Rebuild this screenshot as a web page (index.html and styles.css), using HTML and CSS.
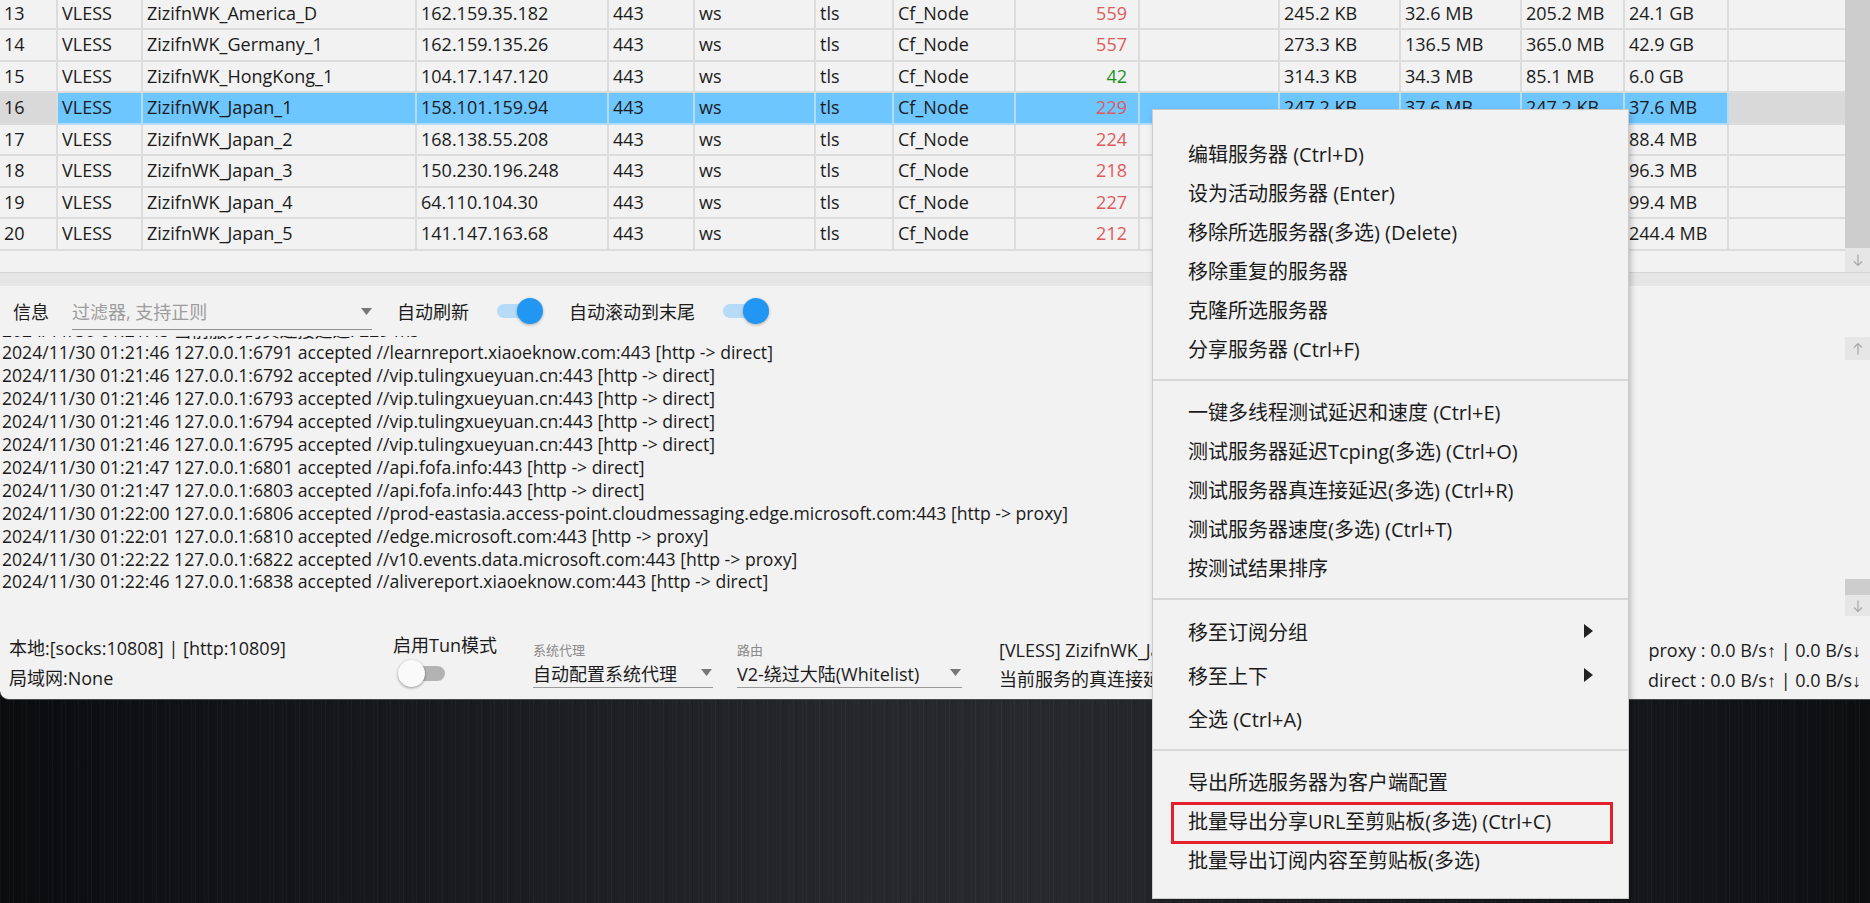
FILE: index.html
```html
<!DOCTYPE html>
<html lang="zh-CN">
<head>
<meta charset="utf-8">
<title>v2rayN</title>
<link rel="stylesheet" href="styles.css">
</head>
<body>
<div class="window">
  <div class="grid-area">
    <div class="grid">
      <div class="rows">
        <div class="row"><div class="cell">13</div><div class="cell">VLESS</div><div class="cell">ZizifnWK_America_D</div><div class="cell">162.159.35.182</div><div class="cell">443</div><div class="cell">ws</div><div class="cell">tls</div><div class="cell">Cf_Node</div><div class="cell num red">559</div><div class="cell"></div><div class="cell">245.2 KB</div><div class="cell">32.6 MB</div><div class="cell">205.2 MB</div><div class="cell">24.1 GB</div><div class="cell fill"></div></div>
        <div class="row"><div class="cell">14</div><div class="cell">VLESS</div><div class="cell">ZizifnWK_Germany_1</div><div class="cell">162.159.135.26</div><div class="cell">443</div><div class="cell">ws</div><div class="cell">tls</div><div class="cell">Cf_Node</div><div class="cell num red">557</div><div class="cell"></div><div class="cell">273.3 KB</div><div class="cell">136.5 MB</div><div class="cell">365.0 MB</div><div class="cell">42.9 GB</div><div class="cell fill"></div></div>
        <div class="row"><div class="cell">15</div><div class="cell">VLESS</div><div class="cell">ZizifnWK_HongKong_1</div><div class="cell">104.17.147.120</div><div class="cell">443</div><div class="cell">ws</div><div class="cell">tls</div><div class="cell">Cf_Node</div><div class="cell num green">42</div><div class="cell"></div><div class="cell">314.3 KB</div><div class="cell">34.3 MB</div><div class="cell">85.1 MB</div><div class="cell">6.0 GB</div><div class="cell fill"></div></div>
        <div class="row sel"><div class="cell">16</div><div class="cell s">VLESS</div><div class="cell s">ZizifnWK_Japan_1</div><div class="cell s">158.101.159.94</div><div class="cell s">443</div><div class="cell s">ws</div><div class="cell s">tls</div><div class="cell s">Cf_Node</div><div class="cell s num red">229</div><div class="cell s"></div><div class="cell s">247.2 KB</div><div class="cell s">37.6 MB</div><div class="cell s">247.2 KB</div><div class="cell s">37.6 MB</div><div class="cell fill"></div></div>
        <div class="row"><div class="cell">17</div><div class="cell">VLESS</div><div class="cell">ZizifnWK_Japan_2</div><div class="cell">168.138.55.208</div><div class="cell">443</div><div class="cell">ws</div><div class="cell">tls</div><div class="cell">Cf_Node</div><div class="cell num red">224</div><div class="cell"></div><div class="cell">198.5 KB</div><div class="cell">41.2 MB</div><div class="cell">2.1 MB</div><div class="cell">88.4 MB</div><div class="cell fill"></div></div>
        <div class="row"><div class="cell">18</div><div class="cell">VLESS</div><div class="cell">ZizifnWK_Japan_3</div><div class="cell">150.230.196.248</div><div class="cell">443</div><div class="cell">ws</div><div class="cell">tls</div><div class="cell">Cf_Node</div><div class="cell num red">218</div><div class="cell"></div><div class="cell">201.7 KB</div><div class="cell">39.9 MB</div><div class="cell">2.4 MB</div><div class="cell">96.3 MB</div><div class="cell fill"></div></div>
        <div class="row"><div class="cell">19</div><div class="cell">VLESS</div><div class="cell">ZizifnWK_Japan_4</div><div class="cell">64.110.104.30</div><div class="cell">443</div><div class="cell">ws</div><div class="cell">tls</div><div class="cell">Cf_Node</div><div class="cell num red">227</div><div class="cell"></div><div class="cell">188.0 KB</div><div class="cell">35.8 MB</div><div class="cell">2.6 MB</div><div class="cell">99.4 MB</div><div class="cell fill"></div></div>
        <div class="row"><div class="cell">20</div><div class="cell">VLESS</div><div class="cell">ZizifnWK_Japan_5</div><div class="cell">141.147.163.68</div><div class="cell">443</div><div class="cell">ws</div><div class="cell">tls</div><div class="cell">Cf_Node</div><div class="cell num red">212</div><div class="cell"></div><div class="cell">230.9 KB</div><div class="cell">44.0 MB</div><div class="cell">5.3 MB</div><div class="cell">244.4 MB</div><div class="cell fill"></div></div>
      </div>
    </div>
    <div class="vscroll">
      <div class="thumb full"></div>
      <div class="sbtn down"><svg width="12" height="14" viewBox="0 0 12 14"><path d="M6 1.5V12.5M2 8.5L6 12.5L10 8.5" fill="none" stroke="#a8a8a8" stroke-width="1.2"/></svg></div>
    </div>
  </div>
  <div class="splitter"></div>
  <div class="log-toolbar">
    <span class="tb-label">信息</span>
    <div class="filter"><span class="ph">过滤器, 支持正则</span><svg width="11" height="7" viewBox="0 0 11 7"><path d="M0 0H11L5.5 7Z" fill="#777"/></svg></div>
    <span class="tb-text t1">自动刷新</span>
    <div class="switch on"><div class="track"></div><div class="knob"></div></div>
    <span class="tb-text t2">自动滚动到末尾</span>
    <div class="switch on"><div class="track"></div><div class="knob"></div></div>
  </div>
  <div class="log-area">
    <div class="log">
      <div class="log-lines">
        <div>2024/11/30 01:21:45 当前服务的真连接延迟: 229 ms</div>
        <div>2024/11/30 01:21:46 127.0.0.1:6791 accepted //learnreport.xiaoeknow.com:443 [http -&gt; direct]</div>
        <div>2024/11/30 01:21:46 127.0.0.1:6792 accepted //vip.tulingxueyuan.cn:443 [http -&gt; direct]</div>
        <div>2024/11/30 01:21:46 127.0.0.1:6793 accepted //vip.tulingxueyuan.cn:443 [http -&gt; direct]</div>
        <div>2024/11/30 01:21:46 127.0.0.1:6794 accepted //vip.tulingxueyuan.cn:443 [http -&gt; direct]</div>
        <div>2024/11/30 01:21:46 127.0.0.1:6795 accepted //vip.tulingxueyuan.cn:443 [http -&gt; direct]</div>
        <div>2024/11/30 01:21:47 127.0.0.1:6801 accepted //api.fofa.info:443 [http -&gt; direct]</div>
        <div>2024/11/30 01:21:47 127.0.0.1:6803 accepted //api.fofa.info:443 [http -&gt; direct]</div>
        <div>2024/11/30 01:22:00 127.0.0.1:6806 accepted //prod-eastasia.access-point.cloudmessaging.edge.microsoft.com:443 [http -&gt; proxy]</div>
        <div>2024/11/30 01:22:01 127.0.0.1:6810 accepted //edge.microsoft.com:443 [http -&gt; proxy]</div>
        <div>2024/11/30 01:22:22 127.0.0.1:6822 accepted //v10.events.data.microsoft.com:443 [http -&gt; proxy]</div>
        <div>2024/11/30 01:22:46 127.0.0.1:6838 accepted //alivereport.xiaoeknow.com:443 [http -&gt; direct]</div>
      </div>
    </div>
    <div class="vscroll log-scroll">
      <div class="sbtn up"><svg width="12" height="14" viewBox="0 0 12 14"><path d="M6 12.5V1.5M2 5.5L6 1.5L10 5.5" fill="none" stroke="#a8a8a8" stroke-width="1.2"/></svg></div>
      <div class="track-space"></div>
      <div class="thumb small"></div>
      <div class="sbtn down2"><svg width="12" height="14" viewBox="0 0 12 14"><path d="M6 1.5V12.5M2 8.5L6 12.5L10 8.5" fill="none" stroke="#a8a8a8" stroke-width="1.2"/></svg></div>
    </div>
  </div>
  <div class="statusbar">
    <div class="sb-local">
      <div>本地:[socks:10808] | [http:10809]</div>
      <div>局域网:None</div>
    </div>
    <div class="sb-tun">
      <div class="tun-label">启用Tun模式</div>
      <div class="switch off"><div class="track"></div><div class="knob"></div></div>
    </div>
    <div class="combo c-proxy">
      <div class="combo-label">系统代理</div>
      <div class="combo-box"><span>自动配置系统代理</span><svg width="11" height="7" viewBox="0 0 11 7"><path d="M0 0H11L5.5 7Z" fill="#777"/></svg></div>
    </div>
    <div class="combo c-route">
      <div class="combo-label">路由</div>
      <div class="combo-box"><span>V2-绕过大陆(Whitelist)</span><svg width="11" height="7" viewBox="0 0 11 7"><path d="M0 0H11L5.5 7Z" fill="#777"/></svg></div>
    </div>
    <div class="sb-info">
      <div>[VLESS] ZizifnWK_Japan_1</div>
      <div>当前服务的真连接延迟: 229 ms</div>
    </div>
    <div class="sb-speed">
      <div>proxy : 0.0 B/s<span class="arr">↑</span> | 0.0 B/s<span class="arr">↓</span></div>
      <div>direct : 0.0 B/s<span class="arr">↑</span> | 0.0 B/s<span class="arr">↓</span></div>
    </div>
  </div>
</div>

<div class="menu">
  <div class="mi">编辑服务器 (Ctrl+D)</div>
  <div class="mi">设为活动服务器 (Enter)</div>
  <div class="mi">移除所选服务器(多选) (Delete)</div>
  <div class="mi">移除重复的服务器</div>
  <div class="mi">克隆所选服务器</div>
  <div class="mi">分享服务器 (Ctrl+F)</div>
  <div class="msep"></div>
  <div class="mi">一键多线程测试延迟和速度 (Ctrl+E)</div>
  <div class="mi">测试服务器延迟Tcping(多选) (Ctrl+O)</div>
  <div class="mi">测试服务器真连接延迟(多选) (Ctrl+R)</div>
  <div class="mi">测试服务器速度(多选) (Ctrl+T)</div>
  <div class="mi">按测试结果排序</div>
  <div class="msep"></div>
  <div class="mi sub"><span>移至订阅分组</span><svg width="9" height="14" viewBox="0 0 9 14"><path d="M0 0L9 7L0 14Z" fill="#222"/></svg></div>
  <div class="mi sub"><span>移至上下</span><svg width="9" height="14" viewBox="0 0 9 14"><path d="M0 0L9 7L0 14Z" fill="#222"/></svg></div>
  <div class="mi">全选 (Ctrl+A)</div>
  <div class="msep"></div>
  <div class="mi">导出所选服务器为客户端配置</div>
  <div class="mi">批量导出分享URL至剪贴板(多选) (Ctrl+C)</div>
  <div class="mi">批量导出订阅内容至剪贴板(多选)</div>
</div>
<div class="highlight"></div>
</body>
</html>
```
FILE: styles.css
```css
* { box-sizing: border-box; }
html, body { margin: 0; padding: 0; }
body {
  width: 1870px;
  height: 903px;
  overflow: hidden;
  position: relative;
  font-family: "Open Sans", "Noto Sans CJK SC", sans-serif;
  color: #1b1b1b;
  background-color: #1b1c1f;
  background-image:
    repeating-linear-gradient(90deg, rgba(255,255,255,0.03) 0 1px, rgba(0,0,0,0) 1px 3px, rgba(0,0,0,0.08) 3px 4px, rgba(0,0,0,0) 4px 9px, rgba(255,255,255,0.02) 9px 10px, rgba(0,0,0,0) 10px 13px),
    linear-gradient(90deg, #0b0c0e 0%, #17181b 20%, #26272a 45%, #28292c 55%, #1b1c1f 80%, #0d0e10 100%);
}

.window {
  height: 700px;
  background: #f2f2f2;
  border-bottom-left-radius: 9px;
  overflow: hidden;
  display: flex;
  flex-direction: column;
  border-bottom: 1px solid #4a4a4a;
}

/* ---------- server grid ---------- */
.grid-area {
  height: 273px;
  flex: none;
  display: flex;
  border-bottom: 1px solid #d6d6d6;
}
.grid { flex: 1; overflow: hidden; }
.rows { margin-top: -1.5px; }
.row {
  display: grid;
  grid-template-columns: 58px 85px 274px 192px 86px 121px 78px 122px 124px 140px 121px 121px 103px 104px 1fr;
  height: 31.5px;
}
.cell {
  border-right: 2px solid #dcdcdc;
  border-bottom: 2px solid #dcdcdc;
  padding-left: 4px;
  font-size: 18px;
  line-height: 29.5px;
  white-space: nowrap;
  overflow: hidden;
}
.cell.fill { border-right: none; }
.cell.num { text-align: right; padding-right: 11px; }
.red { color: #dc5b5b; }
.green { color: #1b931b; }
.row.sel { background: #d9d9d9; }
.row.sel .cell.s { background: #6ec6ff; border-color: #b4dcf7; }

.vscroll {
  width: 25px;
  flex: none;
  display: flex;
  flex-direction: column;
}
.thumb { background: #cdcdcd; }
.thumb.full { height: 248px; }
.sbtn {
  display: flex;
  align-items: center;
  justify-content: center;
  background: #e6e6e6;
}
.sbtn.down { flex: 1; }

.splitter { height: 13px; flex: none; background: #e6e6e6; }

/* ---------- log toolbar ---------- */
.log-toolbar {
  height: 47px;
  flex: none;
  display: flex;
  align-items: center;
  padding-top: 2px;
  font-size: 18px;
}
.tb-label { margin-left: 13px; width: 59px; }
.filter {
  width: 300px;
  height: 34px;
  align-self: flex-end;
  margin-bottom: 3px;
  display: flex;
  align-items: center;
  justify-content: space-between;
  padding-bottom: 3px;
  border-bottom: 1.5px solid #8e8e8e;
  color: #9c9c9c;
}
.tb-text.t1 { margin-left: 25px; width: 100px; }
.tb-text.t2 { margin-left: 26px; width: 154px; }

.switch { position: relative; flex: none; }
.switch .track { position: absolute; border-radius: 8px; }
.switch .knob { position: absolute; border-radius: 50%; }
.switch.on { width: 46px; height: 26px; }
.switch.on .track { left: 0; top: 6px; width: 40px; height: 14px; background: #b5dbf6; }
.switch.on .knob { right: 0; top: 0; width: 26px; height: 26px; background: #2196f3; box-shadow: 0 1px 3px rgba(0,0,0,0.3); }
.switch.off { width: 47px; height: 27px; }
.switch.off .track { left: 5px; top: 6px; width: 42px; height: 15px; background: #b3b3b3; }
.switch.off .knob { left: 0; top: 0; width: 27px; height: 27px; background: #fafafa; box-shadow: 0 1px 3px rgba(0,0,0,0.4); }

/* ---------- log ---------- */
.log-area {
  height: 285px;
  flex: none;
  display: flex;
}
.log {
  flex: 1;
  overflow: hidden;
  margin-top: 3px;
  padding-left: 2px;
  font-size: 17.6px;
  line-height: 22.9px;
  white-space: nowrap;
  color: #1a1a1a;
}
.log-lines { margin-top: -17.5px; }
.log-scroll { padding-top: 4px; }
.sbtn.up { height: 23px; }
.track-space { flex: 1; }
.thumb.small { height: 16px; }
.sbtn.down2 { height: 21px; margin-bottom: 2px; }

/* ---------- status bar ---------- */
.statusbar {
  flex: 1;
  display: flex;
  font-size: 18px;
}
.sb-local {
  width: 393px;
  padding: 15px 0 0 9px;
  line-height: 30px;
  white-space: nowrap;
}
.sb-tun { width: 140px; padding-top: 12px; }
.tun-label { line-height: 30px; white-space: nowrap; }
.sb-tun .switch { margin-left: 5px; }
.combo { padding-top: 24px; }
.c-proxy { width: 180px; margin-right: 24px; }
.c-route { width: 225px; margin-right: 37px; }
.combo-label { font-size: 13px; color: #8a8a8a; line-height: 16px; }
.combo-box {
  display: flex;
  align-items: center;
  justify-content: space-between;
  height: 30px;
  padding-right: 1px;
  border-bottom: 1.5px solid #9a9a9a;
  white-space: nowrap;
}
.sb-info { flex: 1; padding-top: 18px; line-height: 29px; white-space: nowrap; overflow: hidden; }
.sb-speed { padding: 18px 9px 0 0; line-height: 29px; text-align: right; white-space: nowrap; }
.arr { font-family: "Liberation Sans", "DejaVu Sans", sans-serif; }

/* ---------- context menu ---------- */
.menu {
  position: absolute;
  left: 1152px;
  top: 109px;
  width: 477px;
  background: #f2f2f2;
  border: 1px solid #cbcbcb;
  box-shadow: 2px 3px 6px rgba(0,0,0,0.22);
  padding: 24px 0 19px;
  font-size: 20px;
  color: #1b1b1b;
}
.mi {
  height: 39px;
  display: flex;
  align-items: center;
  padding-left: 35px;
  white-space: nowrap;
}
.mi.sub {
  height: 44px;
  justify-content: space-between;
  padding-right: 35px;
  padding-bottom: 4px;
}
.msep {
  height: 24px;
  display: flex;
  align-items: center;
}
.msep::before {
  content: "";
  display: block;
  width: 100%;
  height: 2px;
  background: #d7d7d7;
}
.highlight {
  position: absolute;
  left: 1171px;
  top: 802px;
  width: 442px;
  height: 42px;
  border: 3px solid #e3202b;
}
```
